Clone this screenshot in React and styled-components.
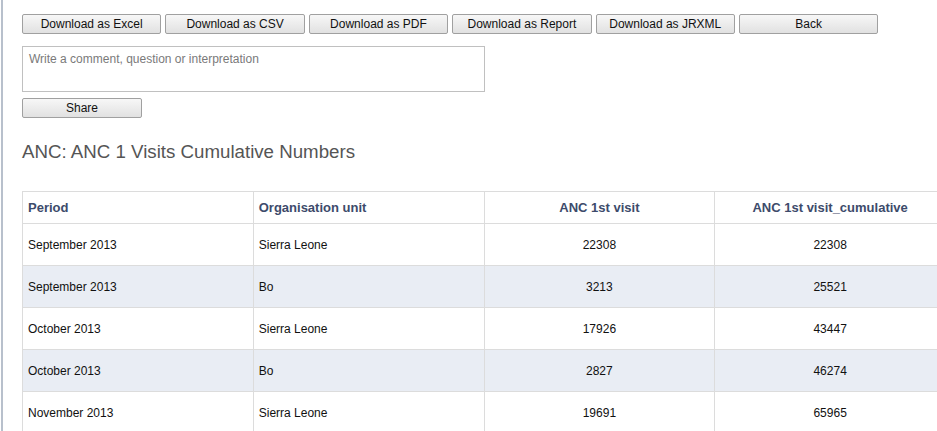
import React from "react";
import styled, { createGlobalStyle } from "styled-components";

const Global = createGlobalStyle`
  html, body { margin: 0; padding: 0; background: #fff; }
  body { font-family: "Liberation Sans", Arial, sans-serif; overflow: hidden; }
`;

const Page = styled.div`
  border-left: 2px solid #b8c0cc;
  margin-left: 1px;
  min-height: 431px;
  padding: 14px 0 0 19px;
  box-sizing: border-box;
`;

const Toolbar = styled.div`
  display: flex;
  gap: 4px;
`;

const Button = styled.button`
  width: ${(p) => p.$w || 139.4}px;
  height: 20px;
  padding: 0;
  margin: 0;
  font-family: "Liberation Sans", Arial, sans-serif;
  font-size: 12px;
  color: #111;
  background: linear-gradient(#f7f7f7, #e1e1e1);
  border: 1px solid #a0a0a0;
  border-radius: 2px;
  box-sizing: border-box;
  line-height: 18px;
`;

const Comment = styled.textarea`
  display: block;
  margin-top: 12px;
  width: 463px;
  height: 46px;
  box-sizing: border-box;
  border: 1px solid #c0c0c0;
  padding: 5px 6px;
  font-family: "Liberation Sans", Arial, sans-serif;
  font-size: 12px;
  resize: none;
  &::placeholder { color: #7a7a7a; }
`;

const ShareRow = styled.div`
  margin-top: 6px;
`;

const Title = styled.h2`
  margin: 23px 0 0 0;
  font-weight: normal;
  font-size: 18.7px;
  line-height: 22px;
  color: #555;
`;

const Table = styled.table`
  margin-top: 28px;
  border-collapse: collapse;
  width: 924px;
  table-layout: fixed;
  font-size: 12px;
`;

const Th = styled.th`
  height: 32px;
  box-sizing: border-box;
  border: 1px solid #dcdcdc;
  padding: 0 5px;
  text-align: ${(p) => (p.$center ? "center" : "left")};
  font-size: 13px;
  font-weight: bold;
  color: #3d4b6b;
`;

const Row = styled.tr`
  background: ${(p) => (p.$alt ? "#e9edf4" : "#fff")};
`;

const Td = styled.td`
  height: 42px;
  box-sizing: border-box;
  border: 1px solid #dcdcdc;
  padding: 0 5px;
  color: #111;
  text-align: ${(p) => (p.$center ? "center" : "left")};
`;

const rows = [
  ["September 2013", "Sierra Leone", "22308", "22308"],
  ["September 2013", "Bo", "3213", "25521"],
  ["October 2013", "Sierra Leone", "17926", "43447"],
  ["October 2013", "Bo", "2827", "46274"],
  ["November 2013", "Sierra Leone", "19691", "65965"],
];

export default function App() {
  return (
    <>
      <Global />
      <Page>
        <Toolbar>
          <Button>Download as Excel</Button>
          <Button>Download as CSV</Button>
          <Button>Download as PDF</Button>
          <Button>Download as Report</Button>
          <Button>Download as JRXML</Button>
          <Button>Back</Button>
        </Toolbar>
        <Comment placeholder="Write a comment, question or interpretation" />
        <ShareRow>
          <Button $w={120}>Share</Button>
        </ShareRow>
        <Title>ANC: ANC 1 Visits Cumulative Numbers</Title>
        <Table>
          <thead>
            <tr>
              <Th>Period</Th>
              <Th>Organisation unit</Th>
              <Th $center>ANC 1st visit</Th>
              <Th $center>ANC 1st visit_cumulative</Th>
            </tr>
          </thead>
          <tbody>
            {rows.map((r, i) => (
              <Row key={i} $alt={i % 2 === 1}>
                <Td>{r[0]}</Td>
                <Td>{r[1]}</Td>
                <Td $center>{r[2]}</Td>
                <Td $center>{r[3]}</Td>
              </Row>
            ))}
          </tbody>
        </Table>
      </Page>
    </>
  );
}
